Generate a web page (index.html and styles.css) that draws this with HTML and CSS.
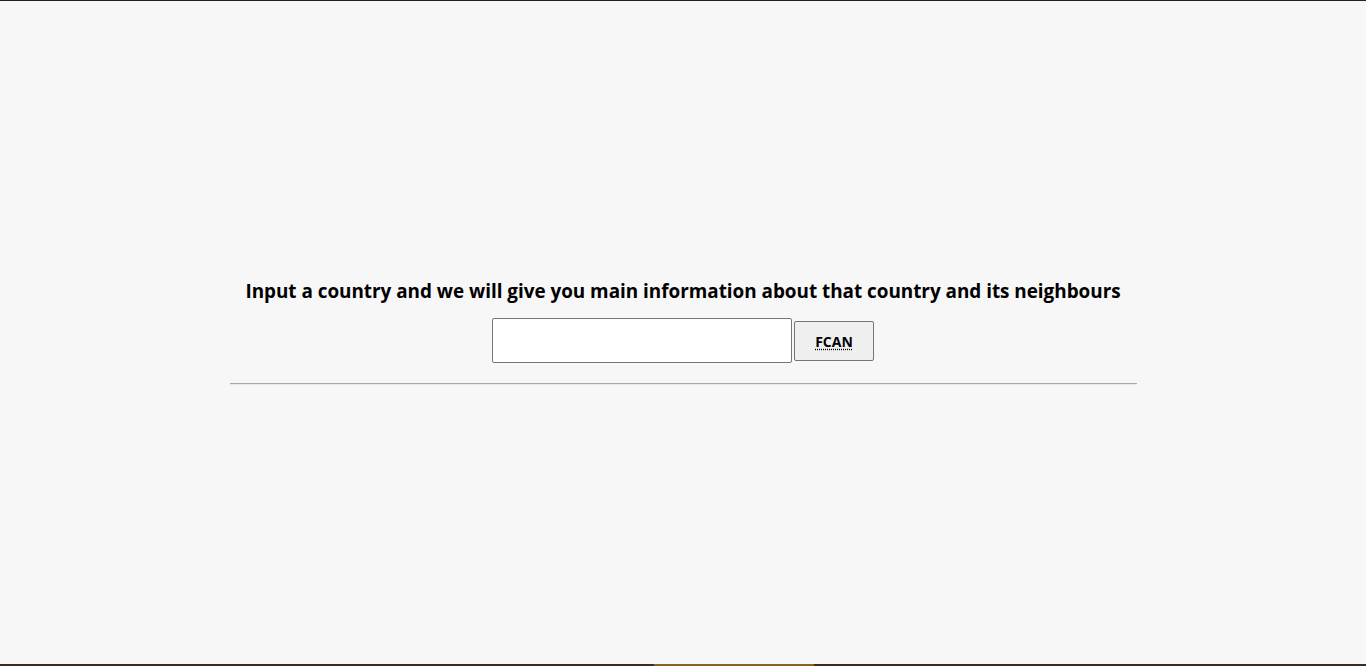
FILE: index.html
```html
<!DOCTYPE html>
<html lang="en">
<head>
<meta charset="utf-8">
<title>Countries</title>
<link rel="stylesheet" href="styles.css">
</head>
<body>
<div class="page">
  <main class="container">
    <h1 class="title">Input a country and we will give you main information about that country and its neighbours</h1>
    <form class="search" onsubmit="return false">
      <input class="search-input" type="text" aria-label="Country">
      <button class="search-btn" type="submit"><abbr class="btn-abbr" title="Find Country And Neighbours">FCAN</abbr></button>
    </form>
    <hr class="divider">
  </main>
</div>
<div class="bottom-bar"><span class="bottom-accent"></span></div>
</body>
</html>
```
FILE: styles.css
```css
html, body {
  margin: 0;
  padding: 0;
  height: 100%;
}
body {
  background: #f7f7f7;
  font-family: "Open Sans", "Noto Sans", "Liberation Sans", sans-serif;
  color: #000;
  border-top: 1px solid #202020;
  box-sizing: border-box;
}
.page {
  padding-top: 276px;
}
.container {
  width: 907px;
  margin: 0 auto;
  display: flex;
  flex-direction: column;
  align-items: center;
}
.title {
  margin: 0;
  font-size: 18.9px;
  letter-spacing: -0.02px;
  line-height: 28px;
  font-weight: 700;
  text-align: center;
  white-space: nowrap;
}
.search {
  margin-top: 13px;
  display: flex;
  align-items: center;
  gap: 2px;
}
.search-input {
  width: 300px;
  height: 45px;
  box-sizing: border-box;
  border: 1px solid #767676;
  border-radius: 2px;
  background: #fff;
  margin: 0;
  padding: 0 6px;
  font-size: 16px;
}
.search-btn {
  width: 80px;
  height: 40px;
  box-sizing: border-box;
  border: 1px solid #767676;
  border-radius: 2px;
  background: #efefef;
  margin: 0;
  padding: 2px 0 0;
  font-family: "Open Sans", "Noto Sans", sans-serif;
  font-size: 14px;
  font-weight: 700;
  color: #000;
}
.btn-abbr {
  text-decoration: underline dotted;
  text-underline-offset: 2px;
}
.divider {
  width: 907px;
  margin: 20px 0 0;
  border: 0;
  border-top: 1px solid #a8a8a8;
  border-bottom: 1px solid #e8e8e8;
  height: 0;
}
.bottom-bar {
  position: fixed;
  left: 0;
  right: 0;
  bottom: 0;
  height: 2px;
  background: #3d2c1c;
}
.bottom-accent {
  position: absolute;
  left: 654px;
  width: 160px;
  top: 0;
  bottom: 0;
  background: #8b6226;
}
```
